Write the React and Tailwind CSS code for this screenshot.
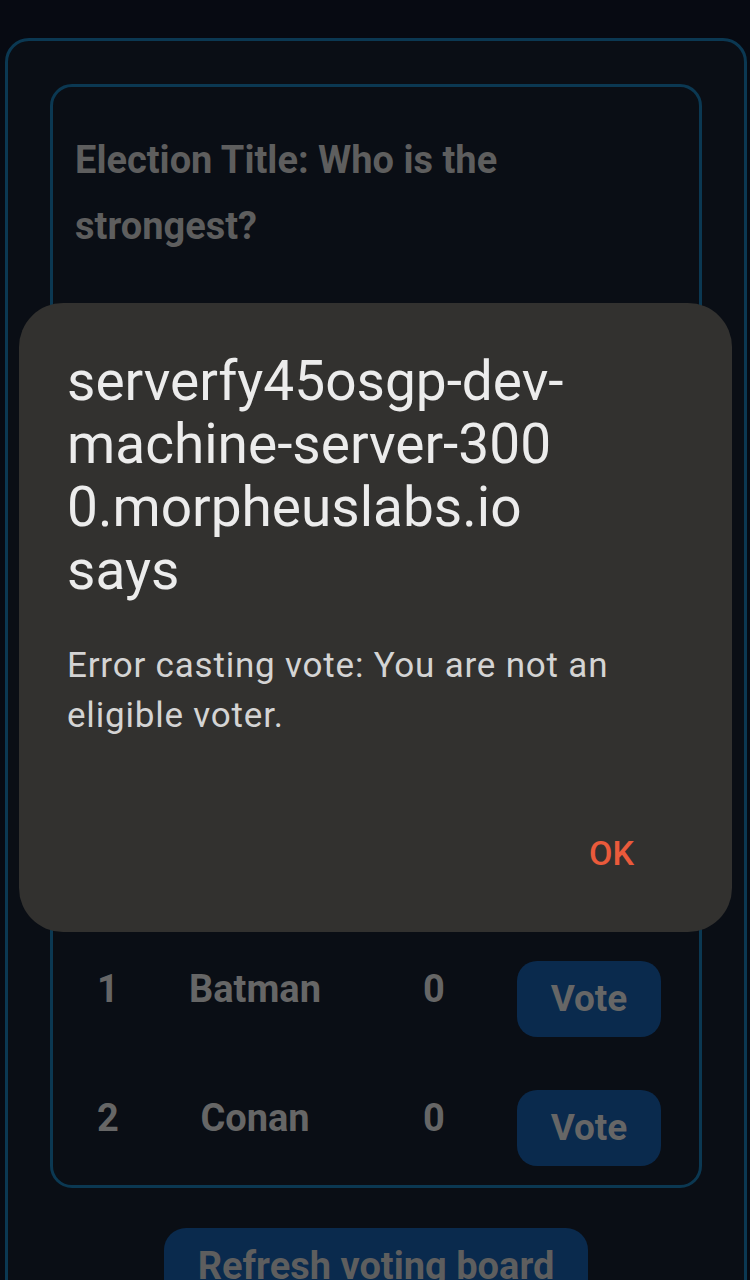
import React from 'react';

const candidates = [
  { id: 1, name: 'Batman', votes: 0 },
  { id: 2, name: 'Conan', votes: 0 },
];

export default function App() {
  return (
    <div className="relative h-[1280px] w-[750px] overflow-hidden bg-[#070a12] pt-[38px] font-['Roboto',_'Liberation_Sans',_sans-serif]">
      {/* Voting board card */}
      <div className="ml-[5px] mr-[3px] rounded-[24px] border-[3px] border-[#0b3852] bg-[#0a0e15] px-[42px] pt-[43px] pb-[60px]">
        <div className="rounded-[22px] border-[3px] border-[#0b3852] bg-[#0a0e15] px-[22px] pt-[40px] pb-[19px]">
          <h1 className="text-[38px] leading-[66px] font-bold text-[#5e5e5e]">
            Election Title: Who is the
            <br />
            strongest?
          </h1>

          {/* area covered by the alert */}
          <div className="h-[702px]" />

          {candidates.map((c, i) => (
            <div key={c.id} className={`flex h-[76px] ${i === 0 ? 'mb-[53px]' : ''}`}>
              <div className="w-[66px] text-center text-[38px] leading-[56px] font-bold text-[#666666]">{c.id}</div>
              <div className="w-[228px] text-center text-[38px] leading-[56px] font-bold text-[#666666]">{c.name}</div>
              <div className="w-[130px] text-center text-[38px] leading-[56px] font-bold text-[#666666]">{c.votes}</div>
              <button className="ml-[18px] h-[76px] w-[144px] rounded-[20px] bg-[#0a2a4d] text-[37px] font-bold text-[#666666]">
                Vote
              </button>
            </div>
          ))}
        </div>

        <div className="mt-[40px] flex justify-center">
          <button className="h-[76px] w-[424px] rounded-[22px] bg-[#0a2a4d] text-[38px] font-bold text-[#5e5e5e]">
            Refresh voting board
          </button>
        </div>
      </div>

      {/* Browser alert dialog */}
      <div className="absolute left-[19px] top-[303px] flex h-[629px] w-[713px] flex-col rounded-[44px] bg-[#32312f] px-[48px] pt-[47px]">
        <div className="text-[55px] leading-[63px] text-[#ececec]">
          <div>serverfy45osgp-dev-</div>
          <div>machine-server-300</div>
          <div>0.morpheuslabs.io</div>
          <div>says</div>
        </div>
        <p className="mt-[39px] text-[35px] leading-[50px] tracking-[0.8px] text-[#d4d4d4]">
          Error casting vote: You are not an
          <br />
          eligible voter.
        </p>
        <div className="mt-auto mb-[56px] flex justify-end pr-[50px]">
          <button className="text-[34px] leading-[46px] font-medium text-[#ea5a3b]">OK</button>
        </div>
      </div>
    </div>
  );
}
